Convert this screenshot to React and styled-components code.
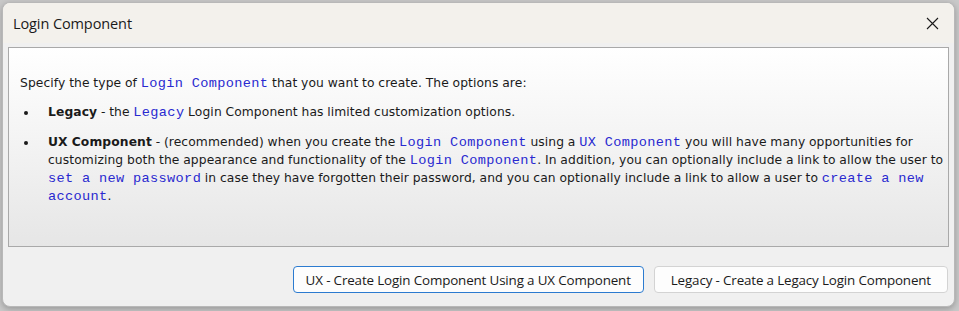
import React from "react";
import styled, { createGlobalStyle } from "styled-components";

const Global = createGlobalStyle`
  html, body { margin: 0; padding: 0; }
  body {
    width: 959px;
    height: 311px;
    background: #c9c9c9;
    overflow: hidden;
    font-family: "Open Sans", "Noto Sans", sans-serif;
  }
`;

const Desktop = styled.div`
  width: 959px;
  height: 311px;
  padding: 2px 4px 4px 2px;
  box-sizing: border-box;
  display: flex;
`;

const Window = styled.div`
  flex: 1;
  display: flex;
  flex-direction: column;
  background: #f0f0f0;
  border: 1px solid #b8b8b8;
  border-radius: 8px;
  overflow: hidden;
  box-shadow: 0 2px 6px rgba(0, 0, 0, 0.25);
`;

const TitleBar = styled.div`
  height: 40px;
  flex: none;
  display: flex;
  align-items: center;
  justify-content: space-between;
  padding: 0 14px 0 10px;
  background: #f3f1ec;
`;

const Title = styled.div`
  font-family: "Open Sans", "Noto Sans", sans-serif;
  font-size: 14.5px;
  color: #1a1a1a;
  letter-spacing: -0.1px;
`;

const CloseButton = styled.button`
  border: none;
  background: transparent;
  padding: 0;
  width: 16px;
  height: 16px;
  display: flex;
  align-items: center;
  justify-content: center;
  cursor: pointer;
`;

const Body = styled.div`
  flex: 1;
  display: flex;
  flex-direction: column;
  padding: 4px 5px 13px 5px;
`;

const Panel = styled.div`
  height: 200px;
  box-sizing: border-box;
  border: 1px solid #a9a9a9;
  background: linear-gradient(to bottom, #ffffff 0%, #f4f4f4 45%, #e6e6e6 100%);
  padding: 26px 3px 0 11px;
  font-family: "DejaVu Sans", "Open Sans", sans-serif;
  font-size: 12.3px;
  color: #1a1a1a;
  letter-spacing: 0.1px;
  word-spacing: -0.3px;
`;

const Para = styled.p`
  margin: 0;
  line-height: 18px;
`;

const List = styled.ul`
  margin: 11px 0 0 0;
  padding: 0 0 0 28px;
  list-style: none;
`;

const Item = styled.li`
  position: relative;
  line-height: 18px;
  margin-bottom: 12px;
  &::before {
    content: "";
    position: absolute;
    left: -24px;
    top: 8px;
    width: 4px;
    height: 4px;
    border-radius: 50%;
    background: #1a1a1a;
  }
`;

const Code = styled.span`
  font-family: "Liberation Mono", "Courier New", monospace;
  font-size: 13.6px;
  line-height: 12px;
  color: #2929d0;
  letter-spacing: 0.35px;
  word-spacing: 0;
`;

const Strong = styled.b`
  font-weight: 700;
`;

const Footer = styled.div`
  flex: 1;
  display: flex;
  justify-content: flex-end;
  align-items: flex-end;
  gap: 10px;
  padding-right: 1px;
`;

const Button = styled.button`
  height: 27px;
  box-sizing: border-box;
  padding: 0 ${(p) => p.$pad}px;
  background: #fdfdfd;
  border: 1px solid ${(p) => (p.$primary ? "#2c7bd0" : "#d3d3d3")};
  border-radius: 4px;
  font-family: "Open Sans", "Noto Sans", sans-serif;
  font-size: 13.4px;
  color: #1a1a1a;
  letter-spacing: -0.15px;
  cursor: pointer;
`;

export default function App() {
  return (
    <>
      <Global />
      <Desktop>
        <Window>
          <TitleBar>
            <Title>Login Component</Title>
            <CloseButton aria-label="Close">
              <svg width="13" height="13" viewBox="0 0 13 13">
                <path d="M1 1 L12 12 M12 1 L1 12" stroke="#1a1a1a" strokeWidth="1.1" />
              </svg>
            </CloseButton>
          </TitleBar>
          <Body>
            <Panel>
              <Para>
                Specify the type of <Code>Login Component</Code> that you want to create. The options are:
              </Para>
              <List>
                <Item>
                  <Strong>Legacy</Strong> - the <Code>Legacy</Code> Login Component has limited customization options.
                </Item>
                <Item>
                  <Strong>UX Component</Strong> - (recommended) when you create the <Code>Login Component</Code> using a{" "}
                  <Code>UX Component</Code> you will have many opportunities for customizing both the appearance and
                  functionality of the <Code>Login Component</Code>. In addition, you can optionally include a link to
                  allow the user to <Code>set a new password</Code> in case they have forgotten their password, and you
                  can optionally include a link to allow a user to <Code>create a new account</Code>.
                </Item>
              </List>
            </Panel>
            <Footer>
              <Button $primary $pad={12}>UX - Create Login Component Using a UX Component</Button>
              <Button $pad={16}>Legacy - Create a Legacy Login Component</Button>
            </Footer>
          </Body>
        </Window>
      </Desktop>
    </>
  );
}
